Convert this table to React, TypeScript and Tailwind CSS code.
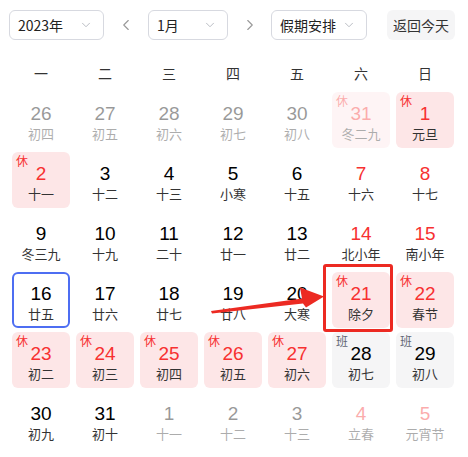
import { ChevronDown, ChevronLeft, ChevronRight } from "lucide-react";

type Day = {
  n: number;
  lunar: string;
  other?: boolean; // outside current month
  red?: boolean;
  tag?: "休" | "班";
  today?: boolean;
};

const WEEK = ["一", "二", "三", "四", "五", "六", "日"];

const DAYS: Day[] = [
  { n: 26, lunar: "初四", other: true },
  { n: 27, lunar: "初五", other: true },
  { n: 28, lunar: "初六", other: true },
  { n: 29, lunar: "初七", other: true },
  { n: 30, lunar: "初八", other: true },
  { n: 31, lunar: "冬二九", other: true, red: true, tag: "休" },
  { n: 1, lunar: "元旦", red: true, tag: "休" },
  { n: 2, lunar: "十一", red: true, tag: "休" },
  { n: 3, lunar: "十二" },
  { n: 4, lunar: "十三" },
  { n: 5, lunar: "小寒" },
  { n: 6, lunar: "十五" },
  { n: 7, lunar: "十六", red: true },
  { n: 8, lunar: "十七", red: true },
  { n: 9, lunar: "冬三九" },
  { n: 10, lunar: "十九" },
  { n: 11, lunar: "二十" },
  { n: 12, lunar: "廿一" },
  { n: 13, lunar: "廿二" },
  { n: 14, lunar: "北小年", red: true },
  { n: 15, lunar: "南小年", red: true },
  { n: 16, lunar: "廿五", today: true },
  { n: 17, lunar: "廿六" },
  { n: 18, lunar: "廿七" },
  { n: 19, lunar: "廿八" },
  { n: 20, lunar: "大寒" },
  { n: 21, lunar: "除夕", red: true, tag: "休" },
  { n: 22, lunar: "春节", red: true, tag: "休" },
  { n: 23, lunar: "初二", red: true, tag: "休" },
  { n: 24, lunar: "初三", red: true, tag: "休" },
  { n: 25, lunar: "初四", red: true, tag: "休" },
  { n: 26, lunar: "初五", red: true, tag: "休" },
  { n: 27, lunar: "初六", red: true, tag: "休" },
  { n: 28, lunar: "初七", tag: "班" },
  { n: 29, lunar: "初八", tag: "班" },
  { n: 30, lunar: "初九" },
  { n: 31, lunar: "初十" },
  { n: 1, lunar: "十一", other: true },
  { n: 2, lunar: "十二", other: true },
  { n: 3, lunar: "十三", other: true },
  { n: 4, lunar: "立春", other: true, red: true },
  { n: 5, lunar: "元宵节", other: true, red: true },
];

function Select({ label, width }: { label: string; width: string }) {
  return (
    <div
      className={`${width} h-[30px] flex items-center justify-between rounded-md border border-[#d7d9e0] bg-white pl-[8px] pr-[10px] text-[14px] text-[#222]`}
    >
      <span>{label}</span>
      <ChevronDown size={14} strokeWidth={1.5} className="text-[#b0b3bb]" />
    </div>
  );
}

function Cell({ d }: { d: Day }) {
  const bg =
    d.tag === "休" ? "bg-[#fde6e7]" : d.tag === "班" ? "bg-[#f5f5f6]" : "";
  const border = d.today ? "border-2 border-[#4e6ef2]" : "";
  return (
    <div className={`h-[60px] px-[3px] py-[2px] ${d.other ? "opacity-40" : ""}`}>
      <div className={`relative h-full rounded-[6px] ${bg} ${border} flex flex-col items-center`}>
        {d.tag ? (
          <span
            className={`absolute left-[4px] top-[2px] text-[12px] leading-[14px] ${
              d.tag === "休" ? "text-[#f73131]" : "text-[#626675]"
            }`}
          >
            {d.tag}
          </span>
        ) : null}
        <span
          className={`${d.today ? "mt-[10px]" : "mt-[12px]"} text-[19px] leading-[20px] font-[Liberation_Sans,Arial,sans-serif] ${
            d.red ? "text-[#f73131]" : "text-black"
          }`}
        >
          {d.n}
        </span>
        <span className="mt-[1px] text-[13px] leading-[18px] text-[#333]">{d.lunar}</span>
      </div>
    </div>
  );
}

export default function App() {
  return (
    <div className="relative w-[468px] h-[457px] bg-white font-['Noto_Sans_CJK_SC','Liberation_Sans',sans-serif]">
      {/* toolbar */}
      <div className="flex items-center pl-[9px] pt-[10px]">
        <Select label="2023年" width="w-[95px]" />
        <div className="w-[44px] flex justify-center text-[#999]">
          <ChevronLeft size={18} strokeWidth={1.5} />
        </div>
        <Select label="1月" width="w-[80px]" />
        <div className="w-[43px] flex justify-center text-[#999]">
          <ChevronRight size={18} strokeWidth={1.5} />
        </div>
        <Select label="假期安排" width="w-[96px]" />
        <div className="ml-[20px] w-[68px] h-[30px] flex items-center justify-center rounded-md bg-[#f5f5f6] text-[14px] text-[#333]">
          返回今天
        </div>
      </div>

      {/* weekday header */}
      <div className="grid grid-cols-7 w-[448px] ml-[9px] pt-[16px] h-[50px]">
        {WEEK.map((w) => (
          <div key={w} className="flex items-center justify-center h-[34px] text-[14px] text-[#333]">
            {w}
          </div>
        ))}
      </div>

      {/* days */}
      <div className="grid grid-cols-7 w-[448px] ml-[9px]">
        {DAYS.map((d, i) => (
          <Cell key={i} d={d} />
        ))}
      </div>

      {/* annotation: box around 21 + arrow */}
      <div className="absolute left-[323px] top-[264px] w-[70px] h-[68px] rounded-[3px] border-[3px] border-[#ec2a22]" />
      <svg className="absolute left-0 top-0 pointer-events-none" width="468" height="457">
        <polygon
          points="211,311 302,298.5 300,287.5 324,296.5 306,307.5 303,303.5 212,313.5"
          fill="#ec2a22"
        />
      </svg>
    </div>
  );
}
